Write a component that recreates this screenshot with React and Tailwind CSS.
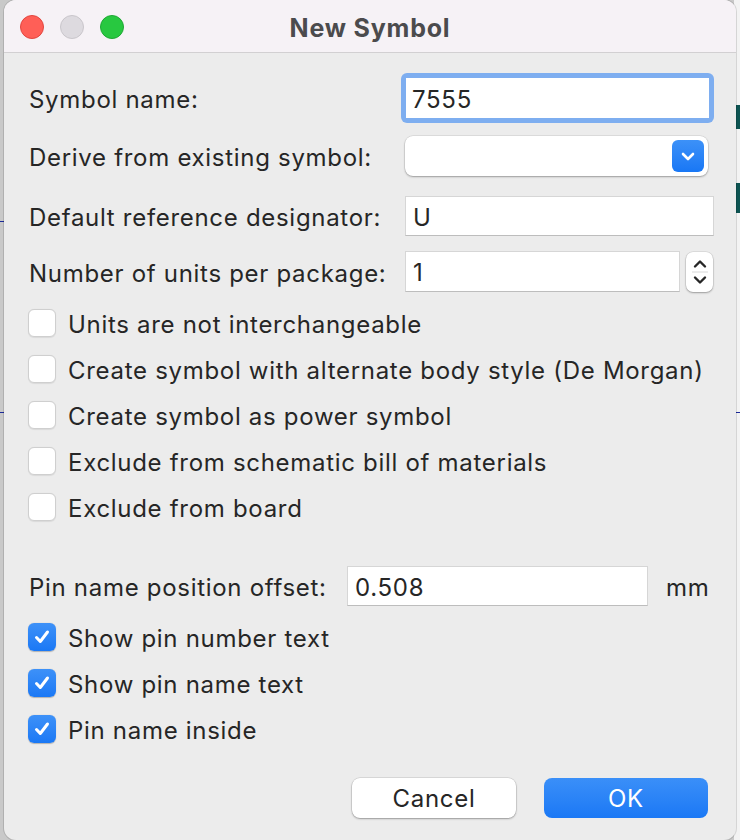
import React from "react";

const FONT = { fontFamily: "Inter, 'Liberation Sans', sans-serif" };

function Field({ value, className = "" }) {
  return (
    <div className={`flex h-[40px] items-center border border-[#d6d6d6] border-b-[#bdbdbd] bg-white pl-[7px] pt-[3px] text-[24px] tracking-[0.7px] text-[#262626] ${className}`}>
      {value}
    </div>
  );
}

function Box({ checked }) {
  if (checked) {
    return (
      <div className="flex h-[28px] w-[28px] items-center justify-center rounded-[6px] bg-gradient-to-b from-[#3d91f8] to-[#1a78f5] shadow-[0_0.5px_1px_rgba(0,0,0,0.25)]">
        <svg width="18" height="18" viewBox="0 0 18 18" fill="none">
          <path d="M3.5 9.5 L7.3 13.5 L14.5 4" stroke="white" strokeWidth="3" strokeLinecap="round" strokeLinejoin="round" />
        </svg>
      </div>
    );
  }
  return <div className="h-[28px] w-[28px] rounded-[6px] border border-[#cfcfcf] bg-white shadow-[0_0.5px_1px_rgba(0,0,0,0.08)]" />;
}

function Check({ label, checked }) {
  return (
    <div className="flex h-[46px] items-center">
      <div className="ml-[-1px]"><Box checked={checked} /></div>
      <span className="ml-[12px] pt-[3px]">{label}</span>
    </div>
  );
}

export default function App() {
  return (
    <div className="relative h-[840px] w-[740px] overflow-hidden bg-[#c9c9c9]" style={FONT}>
      {/* desktop behind the dialog */}
      <div className="absolute right-0 top-0 h-full w-[6px] bg-[#f3f3f3]" />
      <div className="absolute right-0 top-[105px] h-[24px] w-[4px] bg-[#0d5452]" />
      <div className="absolute right-0 top-[183px] h-[30px] w-[4px] bg-[#0d5452]" />
      <div className="absolute left-0 top-[221px] h-[1px] w-[4px] bg-[#1b2a9a]" />
      <div className="absolute left-0 top-[412px] h-[1px] w-[4px] bg-[#1b2a9a]" />
      <div className="absolute right-0 top-[412px] h-[1px] w-[4px] bg-[#1b2a9a]" />

      <div className="relative ml-[4px] flex h-[840px] w-[732px] flex-col overflow-hidden rounded-[12px] bg-[#ececec] shadow-[0_0_0_1px_rgba(0,0,0,0.12)]">
        {/* title bar */}
        <div className="relative flex h-[53px] shrink-0 items-center justify-center border-b border-[#d2d0d2] bg-[#f6f2f6]">
          <div className="absolute left-[16px] top-[15px] flex gap-[16px]">
            <div className="h-[24px] w-[24px] rounded-full border border-[#e2463f] bg-[#ff5f57]" />
            <div className="h-[24px] w-[24px] rounded-full border border-[#c9c6cb] bg-[#dddadf]" />
            <div className="h-[24px] w-[24px] rounded-full border border-[#1fa834] bg-[#28c840]" />
          </div>
          <span className="pt-[5px] text-[25px] font-bold tracking-[0.8px] text-[#4b4b4d]">New Symbol</span>
        </div>

        <div className="flex flex-col pl-[25px] pr-[22px] text-[24px] tracking-[0.7px] text-[#262626]">
          <div className="mt-[20px] flex h-[50px] items-center">
            <span className="w-[372px] pt-[4px]">Symbol name:</span>
            <div className="flex-1 rounded-[6px] bg-[#7eaef0] p-[5px]">
              <div className="flex h-[40px] items-center bg-white pl-[6px] pt-[3px]">7555</div>
            </div>
          </div>

          <div className="mt-[13px] flex h-[40px] items-center">
            <span className="w-[376px] pt-[3px]">Derive from existing symbol:</span>
            <div className="mr-[6px] flex h-[40px] flex-1 items-center justify-end rounded-[8px] bg-white pr-[4px] shadow-[0_0_0_0.5px_rgba(0,0,0,0.12),0_1px_2px_rgba(0,0,0,0.3)]">
              <div className="flex h-[32px] w-[32px] items-center justify-center rounded-[6px] bg-gradient-to-b from-[#3c91f8] to-[#1877f5]">
                <svg width="18" height="18" viewBox="0 0 18 18" fill="none">
                  <path d="M4 7 L9 12 L14 7" stroke="white" strokeWidth="2.6" strokeLinecap="round" strokeLinejoin="round" />
                </svg>
              </div>
            </div>
          </div>

          <div className="mt-[20px] flex items-center">
            <span className="w-[376px] pt-[3px]">Default reference designator:</span>
            <Field value="U" className="flex-1" />
          </div>

          <div className="mt-[15px] flex items-center">
            <span className="w-[376px] pt-[4px]">Number of units per package:</span>
            <Field value="1" className="h-[41px] w-[275px]" />
            <div className="ml-[6px] flex h-[40px] w-[27px] flex-col items-center justify-center rounded-[7px] bg-white shadow-[0_0_0_0.5px_rgba(0,0,0,0.12),0_1px_2px_rgba(0,0,0,0.3)]">
              <svg width="16" height="36" viewBox="0 0 16 36" fill="none">
                <path d="M3 12.5 L8 7.5 L13 12.5" stroke="#262626" strokeWidth="2.4" strokeLinecap="round" strokeLinejoin="round" />
                <line x1="-6" y1="18" x2="22" y2="18" stroke="#d8d8d8" strokeWidth="1" />
                <path d="M3 23.5 L8 28.5 L13 23.5" stroke="#262626" strokeWidth="2.4" strokeLinecap="round" strokeLinejoin="round" />
              </svg>
            </div>
          </div>

          <div className="mt-[8px] flex flex-col">
            <Check label="Units are not interchangeable" />
            <Check label="Create symbol with alternate body style (De Morgan)" />
            <Check label="Create symbol as power symbol" />
            <Check label="Exclude from schematic bill of materials" />
            <Check label="Exclude from board" />
          </div>

          <div className="mt-[36px] flex items-center">
            <span className="w-[318px] pt-[3px]">Pin name position offset:</span>
            <Field value="0.508" className="w-[301px]" />
            <span className="ml-[18px] pt-[3px]">mm</span>
          </div>

          <div className="mt-[8px] flex flex-col">
            <Check label="Show pin number text" checked />
            <Check label="Show pin name text" checked />
            <Check label="Pin name inside" checked />
          </div>

          <div className="mr-[6px] mt-[26px] flex justify-end gap-[28px]">
            <button className="h-[40px] w-[164px] rounded-[8px] bg-white pt-[2px] text-[#262626] shadow-[0_0_0_0.5px_rgba(0,0,0,0.15),0_1px_2px_rgba(0,0,0,0.3)]">Cancel</button>
            <button className="h-[40px] w-[164px] rounded-[8px] bg-gradient-to-b from-[#3a8ff8] to-[#1a78f5] pt-[2px] text-white">OK</button>
          </div>
        </div>
      </div>
    </div>
  );
}
